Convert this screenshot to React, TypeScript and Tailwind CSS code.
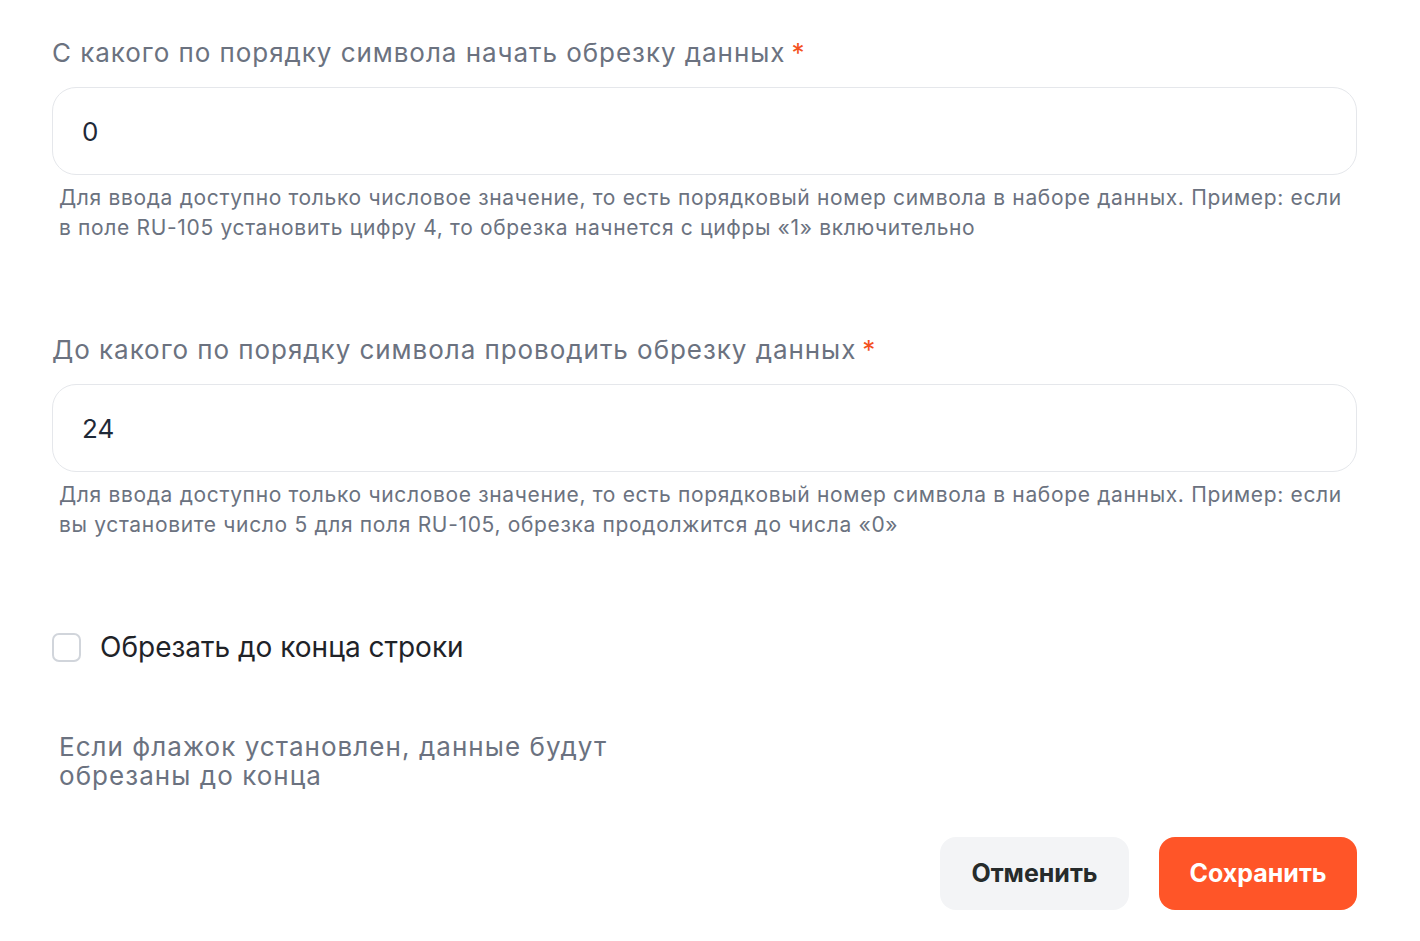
import { useState } from "react";

const font = { fontFamily: "Inter, 'Noto Sans', sans-serif" };

function Field({ label, value, help }: { label: string; value: string; help: React.ReactNode }) {
  return (
    <div className="flex flex-col">
      <label className="text-[26px] leading-[32px] text-[#6b7280] tracking-[0.95px]">
        {label}
        <span className="ml-[6px] text-[#f4511e]">*</span>
      </label>
      <input
        defaultValue={value}
        className="mt-[18px] h-[88px] w-full rounded-[24px] border border-[#e5e7eb] bg-white px-[29px] text-[26px] text-[#1f2937] outline-none"
      />
      <p className="mt-[8px] pl-[7px] pr-[4px] text-[21px] leading-[30px] tracking-[0.66px] text-[#6b7280]">{help}</p>
    </div>
  );
}

export default function App() {
  const [checked, setChecked] = useState(false);
  return (
    <div className="min-h-screen bg-white pl-[52px] pr-[63px] pt-[37px]" style={font}>
      <Field
        label="С какого по порядку символа начать обрезку данных"
        value="0"
        help="Для ввода доступно только числовое значение, то есть порядковый номер символа в наборе данных. Пример: если в поле RU-105 установить цифру 4, то обрезка начнется с цифры «1» включительно"
      />
      <div className="mt-[91px]">
        <Field
          label="До какого по порядку символа проводить обрезку данных"
          value="24"
          help="Для ввода доступно только числовое значение, то есть порядковый номер символа в наборе данных. Пример: если вы установите число 5 для поля RU-105, обрезка продолжится до числа «0»"
        />
      </div>
      <label className="mt-[89px] flex cursor-pointer items-center gap-[19px]">
        <span
          onClick={() => setChecked(!checked)}
          className="h-[29px] w-[29px] rounded-[7px] border-2 border-[#d1d5db] bg-white"
        />
        <span className="text-[28px] leading-[36px] text-[#1f2328]">Обрезать до конца строки</span>
      </label>
      <p className="mt-[67px] w-[580px] pl-[7px] text-[26px] leading-[29px] tracking-[1.05px] text-[#6b7280]">
        Если флажок установлен, данные будут обрезаны до конца
      </p>
      <div className="mt-[47px] flex justify-end gap-[30px]">
        <button className="h-[73px] w-[189px] rounded-[16px] bg-[#f3f4f6] text-[25px] font-bold text-[#262b2b]">
          Отменить
        </button>
        <button className="h-[73px] w-[198px] rounded-[16px] bg-[#ff5528] text-[25px] font-bold text-white">
          Сохранить
        </button>
      </div>
    </div>
  );
}
